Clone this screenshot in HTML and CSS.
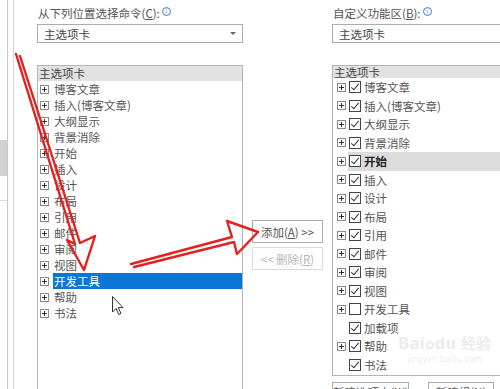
FILE: index.html
```html
<!DOCTYPE html>
<html lang="zh-CN">
<head>
  <meta charset="UTF-8" />
  <meta name="viewport" content="width=device-width, initial-scale=1.0"/>
  <title>自定义功能区</title>
  <link rel="stylesheet" href="styles.css">
</head>
<body>
  <div class="window">
    <div class="edge"><div class="edge-tab"></div><div class="edge-rule"></div></div>
    <div class="edge2"></div>

    <section class="pane pane-left">
      <div class="pane-label">从下列位置选择命令(<u>C</u>):<span class="info">i</span></div>
      <div class="combo"><span>主选项卡</span><span class="combo-arrow"></span></div>
      <div class="tree tree-left">
        <div class="tree-head">主选项卡</div>
        <div class="row"><span class="plus"></span><span class="txt">博客文章</span></div>
        <div class="row"><span class="plus"></span><span class="txt">插入(博客文章)</span></div>
        <div class="row"><span class="plus"></span><span class="txt">大纲显示</span></div>
        <div class="row"><span class="plus"></span><span class="txt">背景消除</span></div>
        <div class="row"><span class="plus"></span><span class="txt">开始</span></div>
        <div class="row"><span class="plus"></span><span class="txt">插入</span></div>
        <div class="row"><span class="plus"></span><span class="txt">设计</span></div>
        <div class="row"><span class="plus"></span><span class="txt">布局</span></div>
        <div class="row"><span class="plus"></span><span class="txt">引用</span></div>
        <div class="row"><span class="plus"></span><span class="txt">邮件</span></div>
        <div class="row"><span class="plus"></span><span class="txt">审阅</span></div>
        <div class="row"><span class="plus"></span><span class="txt">视图</span></div>
        <div class="row selected"><span class="plus"></span><span class="txt">开发工具</span></div>
        <div class="row"><span class="plus"></span><span class="txt">帮助</span></div>
        <div class="row"><span class="plus"></span><span class="txt">书法</span></div>
      </div>
    </section>

    <div class="mid">
      <button class="btn">添加(<u>A</u>) &gt;&gt;</button>
      <button class="btn" disabled>&lt;&lt; 删除(<u>R</u>)</button>
    </div>

    <section class="pane pane-right">
      <div class="pane-label">自定义功能区(<u>B</u>):<span class="info">i</span></div>
      <div class="combo"><span>主选项卡</span></div>
      <div class="tree tree-right">
        <div class="tree-head">主选项卡</div>
        <div class="row"><span class="plus"></span><span class="item"><span class="check on"></span>博客文章</span></div>
        <div class="row"><span class="plus"></span><span class="item"><span class="check on"></span>插入(博客文章)</span></div>
        <div class="row"><span class="plus"></span><span class="item"><span class="check on"></span>大纲显示</span></div>
        <div class="row"><span class="plus"></span><span class="item"><span class="check on"></span>背景消除</span></div>
        <div class="row"><span class="plus"></span><span class="item hl"><span class="check on"></span>开始</span></div>
        <div class="row"><span class="plus"></span><span class="item"><span class="check on"></span>插入</span></div>
        <div class="row"><span class="plus"></span><span class="item"><span class="check on"></span>设计</span></div>
        <div class="row"><span class="plus"></span><span class="item"><span class="check on"></span>布局</span></div>
        <div class="row"><span class="plus"></span><span class="item"><span class="check on"></span>引用</span></div>
        <div class="row"><span class="plus"></span><span class="item"><span class="check on"></span>邮件</span></div>
        <div class="row"><span class="plus"></span><span class="item"><span class="check on"></span>审阅</span></div>
        <div class="row"><span class="plus"></span><span class="item"><span class="check on"></span>视图</span></div>
        <div class="row"><span class="plus"></span><span class="item"><span class="check"></span>开发工具</span></div>
        <div class="row"><span class="plus none"></span><span class="item"><span class="check on"></span>加载项</span></div>
        <div class="row"><span class="plus"></span><span class="item"><span class="check on"></span>帮助</span></div>
        <div class="row"><span class="plus none"></span><span class="item"><span class="check on"></span>书法</span></div>
      </div>
      <div class="bottom-btns">
        <button class="btn btn-wide">新建选项卡(<u>W</u>)</button>
        <button class="btn btn-group">新建组(<u>N</u>)</button>
      </div>
    </section>

    <div class="watermark">
      <div class="wm-logo">Bai<span class="wm-paw">✿</span>du 经验</div>
      <div class="wm-url">jingyan.baidu.com</div>
    </div>

    <svg class="marks" width="500" height="389" viewBox="0 0 500 389">
      <g fill="none" stroke="#e3211f" stroke-width="2.4" stroke-linejoin="round" stroke-linecap="round">
        <!-- arrow pointing to 开发工具 -->
        <path d="M16 54 L75 244 L67 240 L84 270 L95 236 L80 243 L20 56"/>
        <!-- arrow pointing to 添加 -->
        <path d="M131 264 L232 237 L227 221 L258 232 L237 254 L234 242 L134 267"/>
      </g>
      <!-- mouse pointer -->
      <path d="M112.5 296.5 L112.5 312 L116 308.5 L118.8 314.5 L121 313.5 L118.3 307.6 L123 307.6 Z" fill="#fff" stroke="#333" stroke-width="1"/>
    </svg>
  </div>
</body>
</html>
```

FILE: styles.css
```css
body {
  margin: 0;
  background: #fff;
  font-family: "Noto Sans CJK SC", "Noto Sans", sans-serif;
  font-size: 11.5px;
  color: #555;
  overflow: hidden;
}
u {
  text-decoration: underline;
  text-underline-offset: 1px;
}
.window {
  position: relative;
  display: flex;
  width: 500px;
  height: 389px;
  overflow: hidden;
}
.edge {
  width: 7px;
  flex: none;
  border-right: 1px solid #c9c9c9;
}
.edge-tab {
  margin-top: 140px;
  height: 36px;
  background: #d2d2d2;
}
.edge-rule {
  margin-top: 24px;
  border-top: 1px solid #d8d8d8;
}
.edge2 {
  width: 5px;
  flex: none;
  border-right: 1px solid #d6d6d6;
}
.pane {
  flex: none;
  padding-top: 6px;
}
.pane-left {
  width: 206px;
  margin-left: 23px;
}
.pane-right {
  width: 190px;
  margin-left: 9px;
}
.pane-label {
  height: 14px;
  line-height: 14px;
  padding-left: 1px;
  white-space: nowrap;
}
.info {
  display: inline-block;
  width: 7px;
  height: 7px;
  margin-left: 2px;
  border: 1px solid #3d7fc6;
  border-radius: 50%;
  font-size: 6px;
  line-height: 7px;
  text-align: center;
  color: #3d7fc6;
  vertical-align: 4px;
}
.combo {
  display: flex;
  align-items: center;
  justify-content: space-between;
  margin-top: 4px;
  height: 19px;
  padding: 0 6px;
  border: 1px solid #adadad;
  box-sizing: border-box;
  color: #444;
}
.combo-arrow {
  width: 0;
  height: 0;
  border-left: 3px solid transparent;
  border-right: 3px solid transparent;
  border-top: 3px solid #666;
}
.tree {
  margin-top: 22px;
  border: 1px solid #b4b4b4;
  box-sizing: border-box;
  overflow: hidden;
}
.tree-left {
  height: 340px;
}
.tree-right {
  height: 311px;
  border-right: none;
}
.tree-head {
  background: #e2e2e2;
  padding-left: 1px;
  color: #444;
}
.tree-left .tree-head {
  height: 15px;
  line-height: 15px;
}
.tree-right .tree-head {
  height: 12px;
  line-height: 12px;
}
.row {
  display: flex;
  align-items: center;
  padding-left: 2px;
  white-space: nowrap;
}
.tree-left .row {
  height: 16px;
}
.tree-right .row {
  height: 18.5px;
  padding-left: 4px;
}
.plus {
  flex: none;
  width: 9px;
  height: 9px;
  margin-right: 4px;
  box-sizing: border-box;
  border: 1px solid #8a8a8a;
  background:
    linear-gradient(#333, #333) center / 5px 1px no-repeat,
    linear-gradient(#333, #333) center / 1px 5px no-repeat,
    #fff;
}
.tree-right .plus {
  margin-right: 2px;
}
.plus.none {
  border-color: transparent;
  background: none;
}
.txt {
  flex: 1;
  height: 100%;
  line-height: 16px;
  padding-left: 1px;
}
.selected .txt {
  background: #0a76d6;
  color: #fff;
}
.item {
  display: flex;
  align-items: center;
  flex: 1;
  height: 100%;
  padding-left: 1px;
}
.item.hl {
  background: #dcdcdc;
  color: #222;
  font-weight: bold;
}
.check {
  position: relative;
  flex: none;
  width: 12px;
  height: 12px;
  margin-right: 3px;
  box-sizing: border-box;
  border: 1px solid #444;
  background: #fff;
}
.check.on::after {
  content: "";
  position: absolute;
  left: 3px;
  top: 0px;
  width: 3px;
  height: 7px;
  border-right: 1.3px solid #333;
  border-bottom: 1.3px solid #333;
  transform: rotate(40deg);
}
.mid {
  flex: none;
  display: flex;
  flex-direction: column;
  gap: 4px;
  width: 71px;
  margin-left: 9px;
  padding-top: 220px;
}
.btn {
  height: 23px;
  padding: 0;
  border: 1px solid #adadad;
  background: #fdfdfd;
  font: inherit;
  color: #555;
  white-space: nowrap;
}
.btn:disabled {
  border-color: #dcdcdc;
  color: #b8b8b8;
}
.bottom-btns {
  display: flex;
  gap: 19px;
  margin-top: 6px;
}
.bottom-btns .btn {
  height: 20px;
}
.btn-wide {
  width: 77px;
}
.btn-group {
  width: 66px;
}
.watermark {
  position: absolute;
  left: 398px;
  top: 334px;
  color: rgba(190, 190, 190, 0.3);
  font-family: "DejaVu Sans", sans-serif;
  text-align: center;
  white-space: nowrap;
  pointer-events: none;
}
.wm-logo {
  font-size: 15px;
  font-weight: bold;
  line-height: 20px;
}
.wm-paw {
  font-size: 12px;
}
.wm-url {
  font-size: 8px;
  line-height: 10px;
}
.marks {
  position: absolute;
  left: 0;
  top: 0;
  pointer-events: none;
}
```
